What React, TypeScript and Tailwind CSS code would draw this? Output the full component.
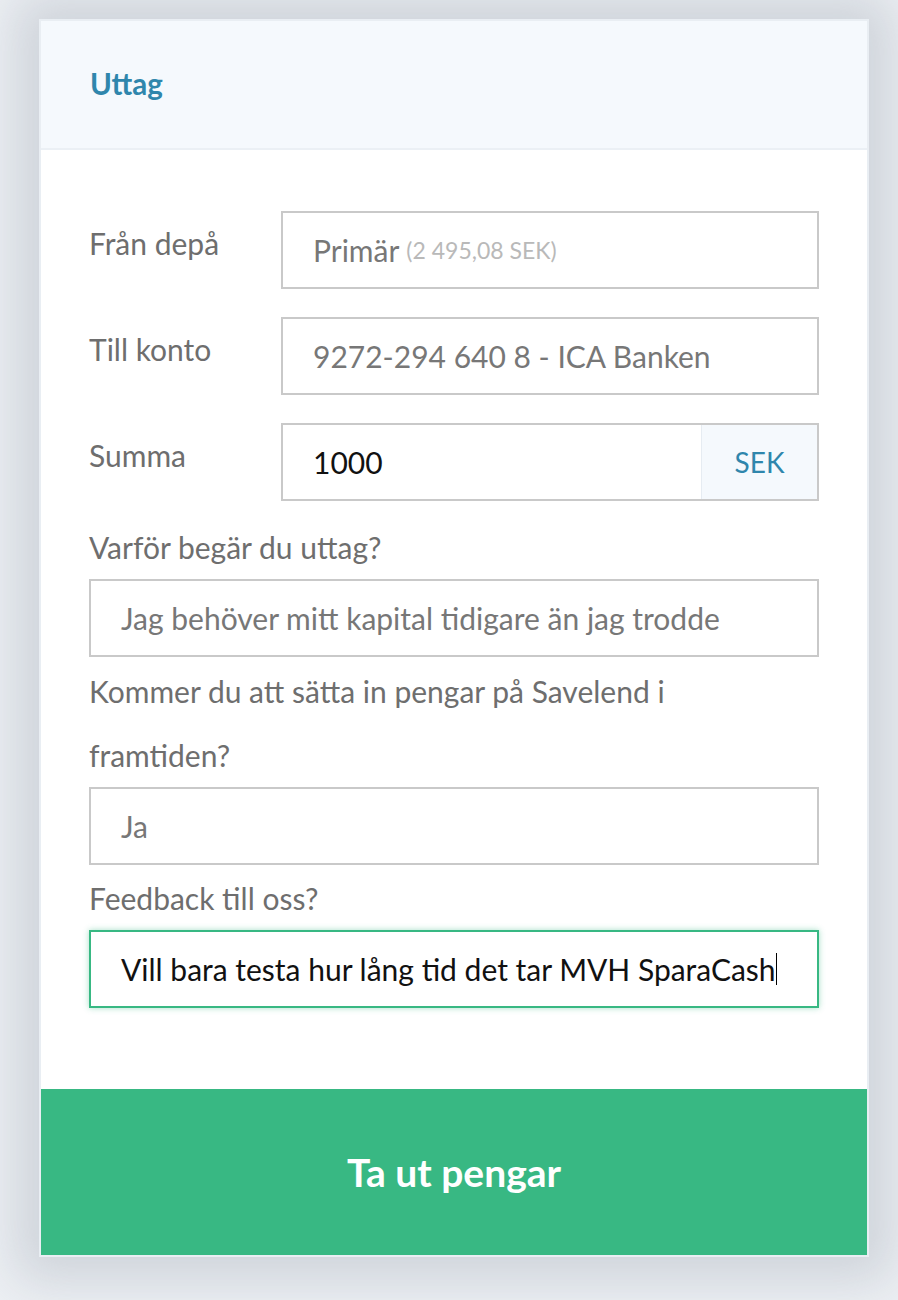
const font = { fontFamily: 'Lato, "Open Sans", sans-serif' };

function Field({ children, className = '' }: { children: React.ReactNode; className?: string }) {
  return (
    <div
      className={`h-[78px] border-2 border-[#c9c9c9] bg-white flex items-center text-[30px] text-[#777777] ${className}`}
    >
      {children}
    </div>
  );
}

function Label({ children, className = '' }: { children: React.ReactNode; className?: string }) {
  return <div className={`text-[30px] leading-[64px] text-[#6e6e6e] ${className}`}>{children}</div>;
}

export default function App() {
  return (
    <div className="min-h-[1300px] bg-[#eef1f5] pt-[19px] pl-[39px]" style={font}>
      <div className="w-[830px] border-2 border-[#e9eef3] bg-white shadow-[0_0_50px_25px_rgba(150,158,170,0.35)]">
        {/* header */}
        <div className="h-[129px] bg-[#f5f9fd] border-b-2 border-[#ebf0f5] flex items-center pl-[49px]">
          <h1 className="text-[29.5px] font-bold text-[#2f86ac]">Uttag</h1>
        </div>

        {/* form */}
        <div className="px-[48px] pt-[61px] pb-[81px]">
          <div className="grid grid-cols-[192px_1fr] gap-y-[28px]">
            <Label>Från depå</Label>
            <Field className="pl-[30px]">
              <span>Primär</span>
              <span className="ml-[7px] text-[23px] text-[#b9b9b9]">(2 495,08 SEK)</span>
            </Field>

            <Label>Till konto</Label>
            <Field className="pl-[30px]">9272-294 640 8 - ICA Banken</Field>

            <Label>Summa</Label>
            <Field className="pl-[30px] !text-[#111]">
              <span className="flex-1">1000</span>
              <span className="h-full w-[116px] bg-[#f5f9fd] border-l border-[#e6ecf2] flex items-center justify-center text-[28px] text-[#2f86ac]">
                SEK
              </span>
            </Field>
          </div>

          <Label className="pt-[14px]">Varför begär du uttag?</Label>
          <Field className="pl-[30px]">Jag behöver mitt kapital tidigare än jag trodde</Field>

          <Label className="pt-[2px]">
            Kommer du att sätta in pengar på Savelend i
            <br />
            framtiden?
          </Label>
          <Field className="pl-[30px]">Ja</Field>

          <Label className="pt-[1px]">Feedback till oss?</Label>
          <Field className="pl-[30px] !border-[#38b883] shadow-[0_0_6px_rgba(56,184,131,0.45)] !text-[#111]">
            <span>Vill bara testa hur lång tid det tar MVH SparaCash</span>
            <span className="w-[1.5px] h-[32px] bg-black" />
          </Field>
        </div>

        <button className="w-full h-[166px] bg-[#38b883] text-white text-[39px] font-bold" style={font}>
          Ta ut pengar
        </button>
      </div>
    </div>
  );
}
